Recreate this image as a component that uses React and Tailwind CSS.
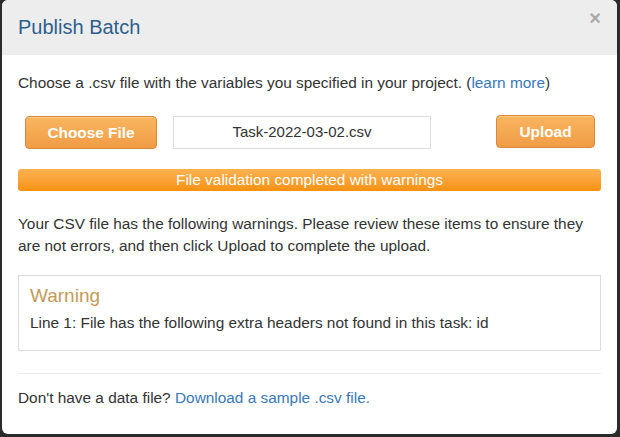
import React from "react";

const orangeBtn =
  "h-[33px] rounded-[4px] border border-[#d9893a] bg-gradient-to-b from-[#fab55f] to-[#f09c45] text-white font-bold text-[15.4px] shadow-[inset_0_1px_0_rgba(255,255,255,0.3)]";

const App = () => {
  return (
    <div className="w-[620px] h-[437px] bg-[#2b2b2b] pl-[2px] pr-[3px] pb-[3px] font-['Liberation_Sans',Arial,sans-serif] text-[#333]">
      <div className="h-full bg-white rounded-[6px] overflow-hidden flex flex-col">
        {/* Header */}
        <div className="h-[55px] bg-[#ededed] flex items-start justify-between pl-[16px] pr-[16px]">
          <h2 className="mt-[15px] text-[20px] leading-[24px] text-[#2d5f8e]">
            Publish Batch
          </h2>
          <span className="mt-[8px] text-[20px] leading-[20px] font-bold text-[#aaa]">
            ×
          </span>
        </div>

        {/* Body */}
        <div className="px-[16px] pt-[18px] text-[15.4px]">
          <p className="leading-[20px]">
            Choose a .csv file with the variables you specified in your project. (
            <a className="text-[#3a78b8]">learn more</a>)
          </p>

          <div className="mt-[23px] flex items-center">
            <button className={`${orangeBtn} ml-[7px] w-[132px]`}>Choose File</button>
            <div className="ml-[16px] w-[258px] h-[33px] border border-[#ddd] flex items-center justify-center text-[15px] text-[#333]">
              Task-2022-03-02.csv
            </div>
            <button className={`${orangeBtn} ml-[65px] w-[99px] -mt-[2px]`}>Upload</button>
          </div>

          <div className="mt-[20px] h-[22px] rounded-[3px] bg-gradient-to-b from-[#fbb24f] to-[#f79208] text-white text-[15.4px] leading-[22px] text-center">
            File validation completed with warnings
          </div>

          <p className="mt-[22px] leading-[22px]">
            Your CSV file has the following warnings. Please review these items to ensure they
            are not errors, and then click Upload to complete the upload.
          </p>

          <div className="mt-[18px] border border-[#ddd] px-[11px] pt-[9px] pb-[17px]">
            <div className="text-[19px] leading-[22px] text-[#c59a58]">Warning</div>
            <div className="mt-[6px] leading-[20px]">
              Line 1: File has the following extra headers not found in this task: id
            </div>
          </div>

          <div className="mt-[22px] border-t border-[#eee]" />

          <p className="mt-[14px] leading-[20px]">
            Don't have a data file? <a className="text-[#3a78b8]">Download a sample .csv file.</a>
          </p>
        </div>
      </div>
    </div>
  );
};

export default App;
